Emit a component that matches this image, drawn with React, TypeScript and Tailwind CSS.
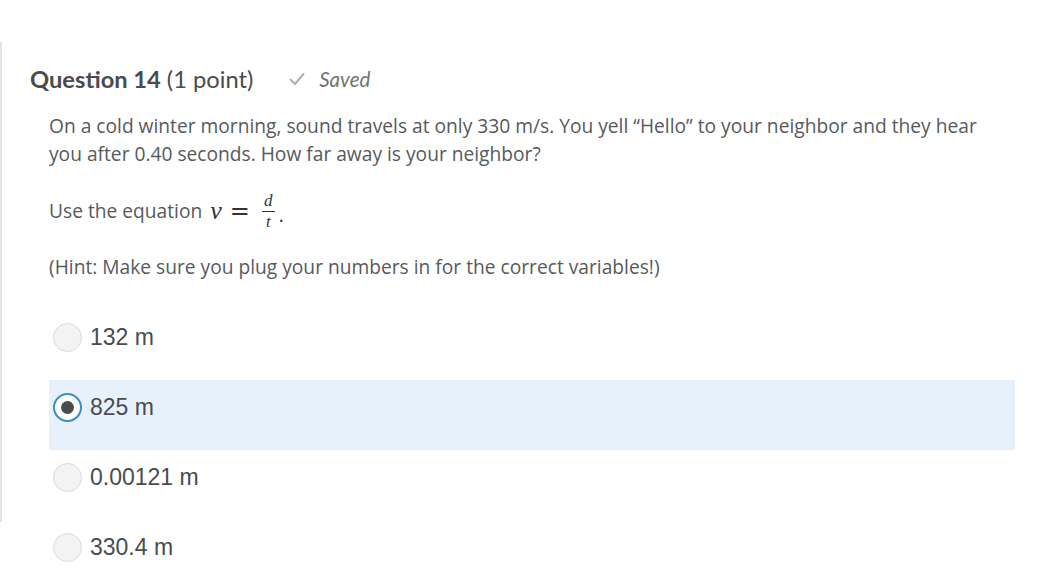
const options = [
  { label: "132 m", checked: false },
  { label: "825 m", checked: true },
  { label: "0.00121 m", checked: false },
  { label: "330.4 m", checked: false },
];

function Radio({ checked }: { checked: boolean }) {
  if (checked) {
    return (
      <span className="flex h-[29px] w-[29px] shrink-0 items-center justify-center rounded-full border-2 border-[#3b8fc0] bg-white">
        <span className="h-[13px] w-[13px] rounded-full bg-[#494c4e]" />
      </span>
    );
  }
  return <span className="h-[29px] w-[29px] shrink-0 rounded-full border border-[#d9dadb] bg-[#f3f3f4]" />;
}

export default function App() {
  return (
    <div className="flex min-h-[586px] bg-white text-[#494c4e]">
      <div className="mt-[42px] h-[480px] w-[2px] shrink-0 bg-[#e3e4e5]" />
      <div className="flex-1 pl-[28px] pt-[65px]">
        <div className="flex items-center font-['Lato',sans-serif] text-[23.7px] leading-[28px]">
          <span className="font-bold">Question 14</span>
          <span className="ml-[6px]">(1 point)</span>
          <span className="ml-[36px] flex items-center text-[20.5px] italic text-[#6e7376]">
            <svg width="16" height="14" viewBox="0 0 16 14" className="mr-[14px]" fill="none">
              <path d="M1.5 7.5 L6 12 L14.5 2" stroke="#aab0b6" strokeWidth="2" strokeLinecap="round" strokeLinejoin="round" />
            </svg>
            Saved
          </span>
        </div>

        <div className="ml-[19px] mt-[19px] font-['Open_Sans',sans-serif] text-[19.2px] leading-[28px] text-[#565a5c]">
          <p className="w-[940px]">
            On a cold winter morning, sound travels at only 330 m/s. You yell “Hello” to your neighbor and they hear you
            after 0.40 seconds. How far away is your neighbor?
          </p>
          <p className="mt-[23px] flex h-[40px] items-center">
            Use the equation
            <span className="ml-[8px] font-['Liberation_Serif',serif] text-[26px] italic leading-[28px] text-[#333]">v</span>
            <span className="ml-[8px] font-['DejaVu_Serif',serif] text-[24px] leading-[28px] text-[#333]">=</span>
            <span className="ml-[12px] flex flex-col items-center font-['Liberation_Serif',serif] text-[17px] italic text-[#333]">
              <span className="block h-[20px] px-[2px] leading-[20px]">d</span>
              <span className="h-px w-[13px] bg-[#333]" />
              <span className="block h-[20px] px-[2px] leading-[20px]">t</span>
            </span>
            <span className="ml-[4px] mt-[8px] leading-[16px] text-[#333]">.</span>
          </p>
          <p className="mt-[22px]">(Hint: Make sure you plug your numbers in for the correct variables!)</p>
        </div>

        <div className="ml-[19px] mt-[29px] w-[966px]">
          {options.map((o) => (
            <div key={o.label} className={`h-[70px] pl-[4px] pt-[13px] ${o.checked ? "bg-[#e7f1fb]" : ""}`}>
              <div className="flex items-center">
                <Radio checked={o.checked} />
                <span className="ml-[8px] font-['Liberation_Sans',sans-serif] text-[23px] leading-[29px] text-[#494c4e]">
                  {o.label}
                </span>
              </div>
            </div>
          ))}
        </div>
      </div>
    </div>
  );
}
